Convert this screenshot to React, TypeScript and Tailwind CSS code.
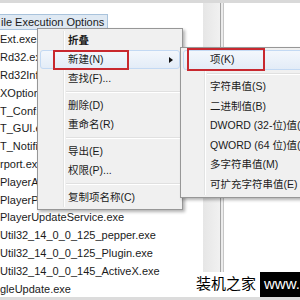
import * as React from "react";

const rows = [
  "ile Execution Options",
  "Ext.exe",
  "Rd32.exe",
  "Rd32Info.exe",
  "XOptions.exe",
  "T_Conf.exe",
  "T_GUI.exe",
  "T_Notifier.exe",
  "rport.exe",
  "PlayerAgent.exe",
  "PlayerPlugin.exe",
  "PlayerUpdateService.exe",
  "Util32_14_0_0_125_pepper.exe",
  "Util32_14_0_0_125_Plugin.exe",
  "Util32_14_0_0_145_ActiveX.exe",
  "gleUpdate.exe",
];

type Entry = { label: string; bold?: boolean; arrow?: boolean; hot?: boolean } | "sep";

const mainMenu: Entry[] = [
  { label: "折叠", bold: true },
  { label: "新建(N)", arrow: true, hot: true },
  { label: "查找(F)..." },
  "sep",
  { label: "删除(D)" },
  { label: "重命名(R)" },
  "sep",
  { label: "导出(E)" },
  { label: "权限(P)..." },
  "sep",
  { label: "复制项名称(C)" },
];

const subMenu: Entry[] = [
  { label: "项(K)", hot: true },
  "sep",
  { label: "字符串值(S)" },
  { label: "二进制值(B)" },
  { label: "DWORD (32-位)值(D)" },
  { label: "QWORD (64 位)值(Q)" },
  { label: "多字符串值(M)" },
  { label: "可扩充字符串值(E)" },
];

function Separator({ indent }: { indent: string }) {
  return (
    <div className={`flex h-[8px] items-center ${indent}`}>
      <div className="h-[2px] flex-1 border-t border-b border-t-[#e0e0e0] border-b-white" />
    </div>
  );
}

function Item({ e, h, pad, box }: { e: Exclude<Entry, "sep">; h: string; pad: string; box?: string }) {
  return (
    <div className={`relative flex items-center ${h} ${pad}`}>
      {e.hot && <div className="absolute inset-0 rounded-[3px] border border-[#c3d9f3] bg-gradient-to-b from-[#f3f7fc] to-[#e3ecf7]" />}
      <span className={`relative whitespace-nowrap ${e.bold ? "font-bold" : ""}`}>{e.label}</span>
      {e.arrow && (
        <div className="absolute right-[7px] top-1/2 h-0 w-0 -translate-y-1/2 border-y-[3.5px] border-l-[4px] border-y-transparent border-l-[#111]" />
      )}
      {box && <div className={`absolute border-2 border-[#c8282f] ${box}`} />}
    </div>
  );
}

export default function App() {
  return (
    <div className="relative h-[300px] w-[300px] overflow-hidden bg-white font-['Liberation_Sans','Noto_Sans_CJK_SC',sans-serif] text-[#1b1b1b]">
      <div className="flex h-full flex-col">
        <div className="h-[3px] bg-[#d9d9d9]" />
        <div className="flex min-h-0 flex-1">
          <div className="w-[203px] overflow-hidden pt-[10px] text-[11px]">
            {rows.map((r, i) => (
              <div key={r} className="flex h-[17.8px] items-center">
                {i === 0 ? (
                  <span className="-ml-[2px] border border-[#a9c3dc] bg-[#dfe9f3] pl-[2px] pr-[3px] leading-[14px]">{r}</span>
                ) : (
                  <span className="whitespace-nowrap">{r}</span>
                )}
              </div>
            ))}
          </div>
          <div className="w-[17px] bg-gradient-to-r from-[#e6e6e6] to-[#f1f1f1]" />
          <div className="w-px bg-[#a4a4a4]" />
          <div className="w-[2px] bg-[#ececec]" />
          <div className="w-px bg-[#c6c6c6]" />
          <div className="flex-1 bg-white" />
        </div>
        <div className="h-[3px] bg-[#dcdcdc]" />
      </div>

      {/* context menu */}
      <div className="absolute left-[37px] top-[28px] h-[182px] w-[146px] border border-[#979797] bg-[#f0f0f0] p-[2px] text-[10.5px] shadow-[2px_2px_3px_rgba(0,0,0,0.3)]">
        <div className="absolute bottom-[2px] left-[25px] top-[2px] w-[2px] border-l border-r border-l-[#e2e3e3] border-r-white" />
        <div className="relative flex flex-col">
          {mainMenu.map((e, i) =>
            e === "sep" ? (
              <Separator key={i} indent="pl-[26px]" />
            ) : (
              <Item key={i} e={e} h="h-[19px]" pad="pl-[28px]" box={e.hot ? "left-[13px] top-0 h-[20px] w-[76px]" : undefined} />
            )
          )}
        </div>
      </div>

      {/* sub menu */}
      <div className="absolute left-[180px] top-[47px] h-[151px] w-[140px] border border-[#979797] bg-[#f0f0f0] p-[2px] text-[10.5px] shadow-[2px_2px_3px_rgba(0,0,0,0.3)]">
        <div className="absolute bottom-[2px] left-[23px] top-[2px] w-[2px] border-l border-r border-l-[#e2e3e3] border-r-white" />
        <div className="relative flex flex-col">
          {subMenu.map((e, i) =>
            e === "sep" ? (
              <Separator key={i} indent="pl-[24px]" />
            ) : (
              <Item key={i} e={e} h="h-[19.5px]" pad="pl-[27px]" box={e.hot ? "left-[4px] -top-[2px] h-[23px] w-[78px]" : undefined} />
            )
          )}
        </div>
      </div>

      {/* watermark */}
      <div className="absolute left-[192px] top-[272px] flex h-[25px] w-[68px] items-center justify-center bg-white text-[15px] text-black">
        装机之家
      </div>
      <div className="absolute left-[260px] top-[272px] flex h-[25px] w-[40px] items-center bg-black pl-[4px] text-[15px] text-white">
        www.
      </div>
    </div>
  );
}
